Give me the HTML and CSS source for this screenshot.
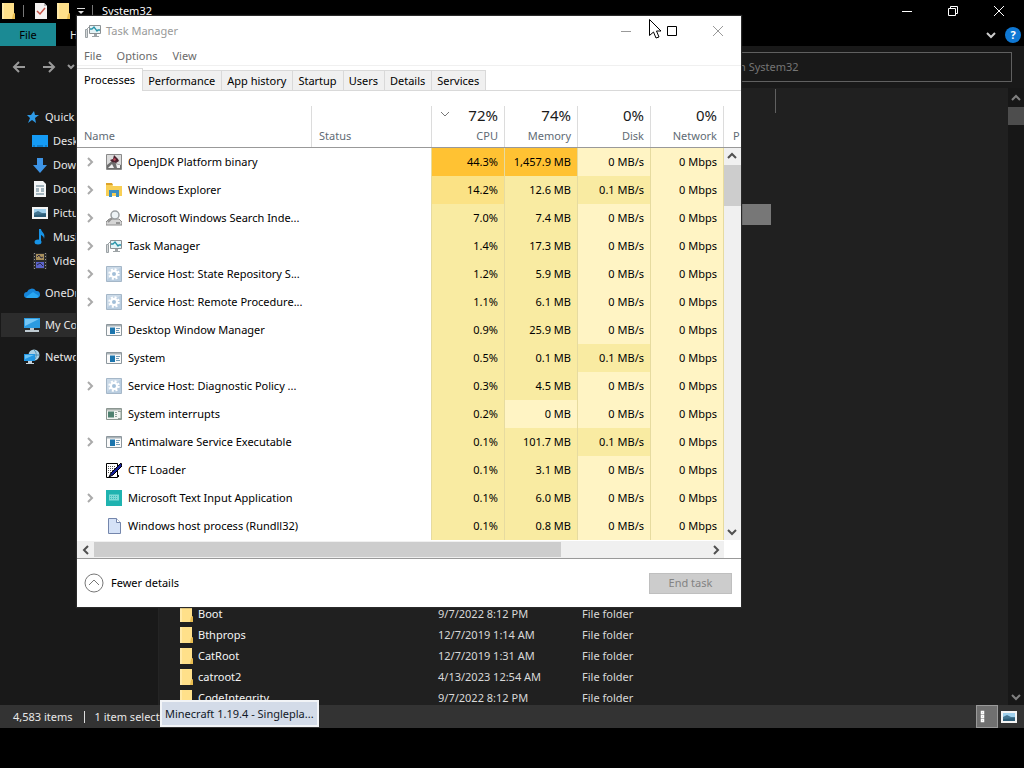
FILE: index.html
```html
<!DOCTYPE html>
<html lang="en">

<head>
	<meta charset="UTF-8">
	<title>System32</title>
	<link rel="stylesheet" href="styles.css">
</head>

<body>
	<!-- Shared icons -->
	<svg class="sprite" aria-hidden="true">
		<symbol id="i-folder" viewBox="0 0 16 16">
			<path d="M2 0h12v11l1 1v4H2z" fill="#ffe08a" />
			<path d="M2 0h2v16H2z" fill="#ffe9a8" />
			<path d="M13 11l2-1v6h-3z" fill="#e9bd51" />
		</symbol>
		<symbol id="i-chevron" viewBox="0 0 16 16">
			<path d="M6 4l4 4-4 4" fill="none" stroke="currentColor" stroke-width="2" />
		</symbol>
		<symbol id="i-taskmgr" viewBox="0 0 16 16">
			<path d="M.5 6.500h2v8h-2z" fill="#d5d8da" stroke="#9aa1a4" />
			<path d="M2 6l2-2" stroke="#9aa1a4" />
			<path d="M4.500 2.500h11v8h-11z" fill="#e4f3f6" stroke="#8b9194" />
			<path d="M5 6h2l2-2 3 4 1-1h2" fill="none" stroke="#2593a8" stroke-width="1.300" />
			<path d="M9 11h3v2h2v1H7v-1h2z" fill="#9da3a6" />
		</symbol>
		<symbol id="i-gear" viewBox="0 0 16 16">
			<path d="M.5.5h15v15H.5z" fill="#b9cde0" stroke="#a5b7c8" />
			<path d="M1 1h14L1 14z" fill="#cbdae8" />
			<circle cx="8" cy="8" r="4.500" fill="none" stroke="#fff" stroke-width="2.500" stroke-dasharray="1.900 1.634" />
			<circle cx="8" cy="8" r="3" fill="#a3bfd8" stroke="#fff" stroke-width="2" />
		</symbol>
		<symbol id="i-app" viewBox="0 0 16 16">
			<path d="M.5 2.500h15v11H.5z" fill="#fafafa" stroke="#8d979d" />
			<path d="M1 3h14v1.500H1z" fill="#a9b3b8" />
			<path d="M4 5.500h5v6.500H4z" fill="#1c75ad" />
			<path d="M10 6.500h4M10 8.500h3M10 10.500h4" stroke="#729bb5" />
		</symbol>
		<symbol id="i-picture" viewBox="0 0 16 16">
			<path d="M0 2h16v12H0z" fill="#f4f4f4" />
			<path d="M2 4h12v8H2z" fill="#9fd0ed" />
			<path d="M2 8l4-2 4 2h4v2H2z" fill="#447591" />
			<path d="M2 10l12-1v3H2z" fill="#2d5d78" />
		</symbol>
	</svg>

	<main class="desktop">
		<section class="explorer">
			<header class="explorer-title">
				<svg class="icon"><use href="#i-folder" /></svg>
				<span class="divider"></span>
				<svg class="icon" viewBox="0 0 16 16">
					<path d="M2 0h9l3 3v13H2z" fill="#f4f1f0" />
					<path d="M11 0v3h3" fill="#bcbcbc" />
					<path d="M4 8l3 3 5-6" fill="none" stroke="#c9564b" stroke-width="1.500" />
				</svg>
				<svg class="icon"><use href="#i-folder" /></svg>
				<svg class="customize" viewBox="0 0 8 8">
					<path d="M0 1.500h8" stroke="#ddd" />
					<path d="M1 4h6L4 7z" fill="#ddd" />
				</svg>
				<span class="divider"></span>
				<h1>System32</h1>
				<div class="controls">
					<button aria-label="Minimize"><svg viewBox="0 0 10 10"><path d="M0 5.500h10" /></svg></button>
					<button aria-label="Restore"><svg viewBox="0 0 10 10"><path d="M.5 2.500h7v7h-7zM2.500 2V.5h7v7H8" /></svg></button>
					<button aria-label="Close"><svg viewBox="0 0 10 10"><path d="M0 0l10 10M10 0L0 10" /></svg></button>
				</div>
			</header>

			<nav class="ribbon">
				<button class="file-tab">File</button>
				<button>Home</button>
				<div class="ribbon-tools">
					<button aria-label="Expand ribbon"><svg class="icon down"><use href="#i-chevron" /></svg></button>
					<button class="help" aria-label="Help">?</button>
				</div>
			</nav>

			<div class="address-row">
				<button aria-label="Back"><svg class="icon" viewBox="0 0 16 16"><path d="M14 8H3M8 3L3 8l5 5" /></svg></button>
				<button aria-label="Forward"><svg class="icon" viewBox="0 0 16 16"><path d="M2 8h11M8 3l5 5-5 5" /></svg></button>
				<button class="recent" aria-label="Recent locations"><svg viewBox="0 0 8 8"><path d="M1 2l3 3 3-3" /></svg></button>
				<input class="search" type="search" placeholder="Search System32" aria-label="Search System32">
			</div>

			<div class="explorer-body">
				<aside class="sidebar">
					<ul>
						<li><a href="#"><svg class="icon" viewBox="0 0 16 16"><path d="M10 2l1 4 4 0-4 3 1 5-4-3-4 3 2-5-3-3h4z" fill="#2e9be8" /></svg>Quick access</a></li>
						<li class="child"><a href="#"><svg class="icon" viewBox="0 0 16 16"><path d="M0 2h16v12H0z" fill="#159bf5" /><path d="M1 13h2M5 13h6M13 13h2" stroke="#0a5d9c" /></svg>Desktop</a></li>
						<li class="child"><a href="#"><svg class="icon" viewBox="0 0 16 16"><path d="M5 1h6v7h4l-7 8-7-8h4z" fill="#3d94e6" /></svg>Downloads</a></li>
						<li class="child"><a href="#"><svg class="icon" viewBox="0 0 16 16"><path d="M2 0h9l3 3v13H2z" fill="#f3f5f6" /><path d="M4 5h8M4 8h3M9 8h3M4 10h3M9 10h3M4 13h8" stroke="#537486" /></svg>Documents</a></li>
						<li class="child"><a href="#"><svg class="icon"><use href="#i-picture" /></svg>Pictures</a></li>
						<li class="child"><a href="#"><svg class="icon" viewBox="0 0 16 16"><ellipse cx="6" cy="13" rx="3.500" ry="2.500" fill="#1793e6" /><path d="M7 0h2c0 3 5 4 3 10 0-3-3-4-3-4v7H7z" fill="#1793e6" /></svg>Music</a></li>
						<li class="child"><a href="#"><svg class="icon" viewBox="0 0 16 16"><path d="M1 0h14v16H1z" fill="#2b2b2b" /><path d="M2.500 0v16M13.500 0v16" stroke="#999" stroke-dasharray="1 2" /><path d="M4 1h8v6H4z" fill="#a78f5c" /><path d="M4 9h8v6H4z" fill="#5a62c8" /><path d="M5 4l2-2 2 3 2-1M5 12l3-2 3 3" fill="none" stroke="#2a2740" /></svg>Videos</a></li>
					</ul>
					<ul>
						<li><a href="#"><svg class="icon" viewBox="0 0 16 16"><path d="M3 13a3 3 0 0 1 0-6 5 5 0 0 1 9-1 3.500 3.500 0 0 1 1 7z" fill="#1685d9" /><path d="M2 12l7-5 6 4-2 2H3z" fill="#29a7f2" /></svg>OneDrive</a></li>
					</ul>
					<ul>
						<li class="current"><a href="#"><svg class="icon" viewBox="0 0 16 16"><path d="M0 1h16v10H0z" fill="#2c9be0" /><path d="M1 2h14L1 9z" fill="#75c6f5" /><path d="M6 11h4v2H6zM1 13h14v2H1z" fill="#bfcbd2" /></svg>My Computer</a></li>
					</ul>
					<ul>
						<li><a href="#"><svg class="icon" viewBox="0 0 16 16"><circle cx="10" cy="6" r="5.500" fill="#a9cfe5" /><path d="M10 1c3 2 3 8 0 10M5 6h10" fill="none" stroke="#4e8fb5" /><path d="M0 5h11v7H0z" fill="#2296e3" /><path d="M1 6h9l-9 4z" fill="#6cc3f4" /><path d="M4 12h4v2h2v1H2v-1h2z" fill="#c4d2db" /></svg>Network</a></li>
					</ul>
				</aside>

				<div class="file-pane">
					<table class="files">
						<thead>
							<tr>
								<th class="f-name"></th>
								<th class="f-date"></th>
								<th class="f-type"></th>
								<th class="f-size"><span></span></th>
							</tr>
						</thead>
						<tbody>
							<tr class="above-selected"><td colspan="4"></td></tr>
							<tr class="selected"><td colspan="4"></td></tr>
							<tr class="below-selected"><td colspan="4"></td></tr>
							<tr><td><svg class="icon"><use href="#i-folder" /></svg>Boot</td><td>9/7/2022 8:12 PM</td><td>File folder</td><td></td></tr>
							<tr><td><svg class="icon"><use href="#i-folder" /></svg>Bthprops</td><td>12/7/2019 1:14 AM</td><td>File folder</td><td></td></tr>
							<tr><td><svg class="icon"><use href="#i-folder" /></svg>CatRoot</td><td>12/7/2019 1:31 AM</td><td>File folder</td><td></td></tr>
							<tr><td><svg class="icon"><use href="#i-folder" /></svg>catroot2</td><td>4/13/2023 12:54 AM</td><td>File folder</td><td></td></tr>
							<tr><td><svg class="icon"><use href="#i-folder" /></svg>CodeIntegrity</td><td>9/7/2022 8:12 PM</td><td>File folder</td><td></td></tr>
						</tbody>
					</table>
				</div>

				<div class="scrollbar dark">
					<svg class="icon up"><use href="#i-chevron" /></svg>
					<div class="thumb"></div>
					<svg class="icon down"><use href="#i-chevron" /></svg>
				</div>
			</div>

			<footer class="status-bar">
				<span>4,583 items</span>
				<span class="divider"></span>
				<span>1 item selected</span>
				<div class="views">
					<button class="active" aria-label="Details view">
						<svg viewBox="0 0 20 20"><path d="M4.500 4.500h2v2h-2zM4.500 8.500h2v2h-2zM4.500 12.500h2v2h-2z" fill="#555" stroke="#fff" stroke-width="1.500" /></svg>
					</button>
					<button aria-label="Thumbnail view"><svg class="icon"><use href="#i-picture" /></svg></button>
				</div>
			</footer>
		</section>

		<section class="taskmgr">
			<header class="tm-title">
				<svg class="icon"><use href="#i-taskmgr" /></svg>
				<h2>Task Manager</h2>
				<div class="controls">
					<button aria-label="Minimize"><svg viewBox="0 0 10 10"><path d="M0 5.500h10" /></svg></button>
					<button class="hover" aria-label="Maximize"><svg viewBox="0 0 10 10"><path d="M.5.5h9v9h-9z" /></svg></button>
					<button aria-label="Close"><svg viewBox="0 0 10 10"><path d="M0 0l10 10M10 0L0 10" /></svg></button>
				</div>
			</header>

			<nav class="tm-menu">
				<button>File</button>
				<button>Options</button>
				<button>View</button>
			</nav>

			<div class="tabs" role="tablist">
				<button role="tab" class="active" aria-selected="true">Processes</button>
				<button role="tab">Performance</button>
				<button role="tab">App history</button>
				<button role="tab">Startup</button>
				<button role="tab">Users</button>
				<button role="tab">Details</button>
				<button role="tab">Services</button>
			</div>

			<div class="process-view">
				<table class="processes">
					<colgroup>
						<col class="c-name">
						<col class="c-status">
						<col span="4" class="c-usage">
					</colgroup>
					<thead>
						<tr>
							<th><span>Name</span></th>
							<th><span>Status</span></th>
							<th class="sorted"><svg class="sort" viewBox="0 0 10 6"><path d="M1 1l4 4 4-4" /></svg><span><b>72%</b>CPU</span></th>
							<th><span><b>74%</b>Memory</span></th>
							<th><span><b>0%</b>Disk</span></th>
							<th><span><b>0%</b>Network</span></th>
						</tr>
					</thead>
					<tbody>
						<tr>
							<td><div><svg class="icon expand"><use href="#i-chevron" /></svg><svg class="icon" viewBox="0 0 16 16"><path d="M.5.5h15v15H.5z" fill="#dcdcdc" stroke="#8a8a8a" /><path d="M1 11l5-4 3 2 6 2v4H1z" fill="#6d6d6d" /><path d="M2 14l4-4 2 4zM10 10l4 1v3h-3z" fill="#f2f2f2" /><path d="M8 1l4 4 1 2-3 2-4-1-2-2 3-1z" fill="#49232f" /><path d="M8 4l2 1-1 2-2-1z" fill="#c64b5d" /></svg>OpenJDK Platform binary</div></td>
							<td></td><td class="hot">44.3%</td><td class="hot">1,457.9 MB</td><td>0 MB/s</td><td>0 Mbps</td>
						</tr>
						<tr>
							<td><div><svg class="icon expand"><use href="#i-chevron" /></svg><svg class="icon" viewBox="0 0 16 16"><path d="M0 2h6l1 2h9v10H0z" fill="#f8cf55" /><path d="M0 1h6l1 2H0z" fill="#dda329" /><path d="M3 8h10v7h-3v-4H6v4H3z" fill="#3c8fc0" /></svg>Windows Explorer</div></td>
							<td></td><td class="warm">14.2%</td><td class="low">12.6 MB</td><td class="low">0.1 MB/s</td><td>0 Mbps</td>
						</tr>
						<tr>
							<td><div><svg class="icon expand"><use href="#i-chevron" /></svg><svg class="icon" viewBox="0 0 16 16"><path d="M3 9h10l3 3v3H0v-3z" fill="#d5d5d5" stroke="#8c8c8c" /><path d="M10 13h4" stroke="#555" /><circle cx="9" cy="5" r="4" fill="#edf3f6" stroke="#9a9fa2" stroke-width="1.500" /><path d="M6 8l-4 4" stroke="#909090" stroke-width="2" /></svg>Microsoft Windows Search Inde...</div></td>
							<td></td><td class="low">7.0%</td><td class="low">7.4 MB</td><td>0 MB/s</td><td>0 Mbps</td>
						</tr>
						<tr>
							<td><div><svg class="icon expand"><use href="#i-chevron" /></svg><svg class="icon"><use href="#i-taskmgr" /></svg>Task Manager</div></td>
							<td></td><td class="low">1.4%</td><td class="low">17.3 MB</td><td>0 MB/s</td><td>0 Mbps</td>
						</tr>
						<tr>
							<td><div><svg class="icon expand"><use href="#i-chevron" /></svg><svg class="icon"><use href="#i-gear" /></svg>Service Host: State Repository S...</div></td>
							<td></td><td class="low">1.2%</td><td class="low">5.9 MB</td><td>0 MB/s</td><td>0 Mbps</td>
						</tr>
						<tr>
							<td><div><svg class="icon expand"><use href="#i-chevron" /></svg><svg class="icon"><use href="#i-gear" /></svg>Service Host: Remote Procedure...</div></td>
							<td></td><td class="low">1.1%</td><td class="low">6.1 MB</td><td>0 MB/s</td><td>0 Mbps</td>
						</tr>
						<tr>
							<td><div class="single"><svg class="icon"><use href="#i-app" /></svg>Desktop Window Manager</div></td>
							<td></td><td class="low">0.9%</td><td class="low">25.9 MB</td><td>0 MB/s</td><td>0 Mbps</td>
						</tr>
						<tr>
							<td><div class="single"><svg class="icon"><use href="#i-app" /></svg>System</div></td>
							<td></td><td class="low">0.5%</td><td class="low">0.1 MB</td><td class="low">0.1 MB/s</td><td>0 Mbps</td>
						</tr>
						<tr>
							<td><div><svg class="icon expand"><use href="#i-chevron" /></svg><svg class="icon"><use href="#i-gear" /></svg>Service Host: Diagnostic Policy ...</div></td>
							<td></td><td class="low">0.3%</td><td class="low">4.5 MB</td><td>0 MB/s</td><td>0 Mbps</td>
						</tr>
						<tr>
							<td><div class="single"><svg class="icon" viewBox="0 0 16 16"><path d="M.5 2.500h15v11H.5z" fill="#f2f4f2" stroke="#8b9691" /><path d="M1 3h14v1.500H1z" fill="#aab3af" /><path d="M2 5.500h6v6H2z" fill="#4f8170" /><path d="M9 6.500h2M9 8.500h2M9 10.500h2M12 5.500h3v7h-3" fill="none" stroke="#93a39b" /></svg>System interrupts</div></td>
							<td></td><td class="low">0.2%</td><td>0 MB</td><td>0 MB/s</td><td>0 Mbps</td>
						</tr>
						<tr>
							<td><div><svg class="icon expand"><use href="#i-chevron" /></svg><svg class="icon"><use href="#i-app" /></svg>Antimalware Service Executable</div></td>
							<td></td><td class="low">0.1%</td><td class="low">101.7 MB</td><td class="low">0.1 MB/s</td><td>0 Mbps</td>
						</tr>
						<tr>
							<td><div class="single"><svg class="icon" viewBox="0 0 16 16"><path d="M.5 1.500h11v14H.5z" fill="#fff" stroke="#000" /><path d="M2 4.500h8M2 6.500h8M2 8.500h6M2 10.500h4" stroke="#555" stroke-dasharray="1 1" /><path d="M15 1L5 11l-2 4 4-2L16 4z" fill="#15209a" stroke="#000" /><path d="M12 14h1" stroke="#000" stroke-width="2" /></svg>CTF Loader</div></td>
							<td></td><td class="low">0.1%</td><td class="low">3.1 MB</td><td>0 MB/s</td><td>0 Mbps</td>
						</tr>
						<tr>
							<td><div><svg class="icon expand"><use href="#i-chevron" /></svg><svg class="icon" viewBox="0 0 16 16"><path d="M0 0h16v16H0z" fill="#1fb3b0" /><path d="M3 4.500h10v6H3z" fill="#7edad7" /><path d="M4 6.500h8M4 8.500h8" stroke="#39bbb8" stroke-dasharray="1 1" /></svg>Microsoft Text Input Application</div></td>
							<td></td><td class="low">0.1%</td><td class="low">6.0 MB</td><td>0 MB/s</td><td>0 Mbps</td>
						</tr>
						<tr>
							<td><div class="single"><svg class="icon" viewBox="0 0 16 16"><path d="M2.500.5h8l4 4v11h-12z" fill="#d5e2f7" stroke="#7486ac" /><path d="M10.500.5v4h4" fill="#fff" stroke="#7486ac" /></svg>Windows host process (Rundll32)</div></td>
							<td></td><td class="low">0.1%</td><td class="low">0.8 MB</td><td>0 MB/s</td><td>0 Mbps</td>
						</tr>
					</tbody>
				</table>
				<div class="edge">
					<div class="next-column">P</div>
					<div class="scrollbar">
						<svg class="icon up"><use href="#i-chevron" /></svg>
						<div class="thumb"></div>
						<svg class="icon down"><use href="#i-chevron" /></svg>
					</div>
				</div>
			</div>

			<div class="scrollbar horizontal">
				<svg class="icon left"><use href="#i-chevron" /></svg>
				<div class="track"><div class="thumb"></div></div>
				<svg class="icon"><use href="#i-chevron" /></svg>
			</div>

			<footer class="tm-footer">
				<button class="fewer">
					<svg viewBox="0 0 20 20"><circle cx="10" cy="10" r="9" /><path d="M5 12l5-5 5 5" /></svg>
					Fewer details
				</button>
				<button class="end-task" disabled>End task</button>
			</footer>
		</section>

		<div class="tooltip">Minecraft 1.19.4 - Singlepla...</div>
		<svg class="cursor" viewBox="0 0 13 20"><path d="M.5.5v16l4-3.500 2.500 6 3-1-2.500-6H12z" /></svg>
	</main>
</body>

</html>
```
FILE: styles.css
```css
* {
	box-sizing: border-box;
}

body {
	margin: 0;
	background: #000;
	font-family: "Noto Sans", "Open Sans", sans-serif;
	font-size: 11px;
	line-height: 16px;
	color: #000;
}

button {
	font: inherit;
	color: inherit;
	background: none;
	border: 0;
	padding: 0;
}

svg {
	display: block;
	flex: none;
}

ul {
	list-style: none;
	margin: 0;
	padding: 0;
}

a {
	color: inherit;
	text-decoration: none;
}

table {
	border-collapse: separate;
	border-spacing: 0;
	table-layout: fixed;
}

h1,
h2 {
	margin: 0;
	font-size: 11px;
	font-weight: normal;
}

.sprite {
	display: none;
}

.icon {
	width: 16px;
	height: 16px;
}

.up {
	transform: rotate(-90deg);
}

.down {
	transform: rotate(90deg);
}

.left {
	transform: rotate(180deg);
}

.desktop {
	position: relative;
	height: 100vh;
	padding-bottom: 40px;
	overflow: hidden;
}

.controls {
	display: flex;
	align-self: stretch;
	margin-left: auto;
}

.controls button {
	display: grid;
	place-items: center;
	width: 46px;
}

.controls svg {
	width: 10px;
	height: 10px;
	overflow: visible;
	fill: none;
	stroke: currentColor;
}

/* Explorer */

.explorer {
	display: flex;
	flex-direction: column;
	height: 100%;
	color: #e8e8e8;
}

.explorer-title {
	display: flex;
	align-items: center;
	gap: 6px;
	height: 23px;
	padding: 0 2px 2px 0;
	color: #fff;
}

.divider {
	width: 2px;
	height: 12px;
	border-right: 1px solid #777;
}

.explorer-title .divider {
	margin-right: 3px;
}

.customize {
	width: 8px;
	height: 8px;
}

.ribbon {
	display: flex;
	height: 23px;
}

.ribbon .file-tab {
	width: 56px;
	margin-right: 14px;
	background: #1b8a94;
	color: #000;
}

.ribbon-tools {
	display: flex;
	align-items: center;
	gap: 6px;
	margin-left: auto;
	padding-right: 3px;
	color: #ccc;
}

.help {
	width: 16px;
	height: 16px;
	border-radius: 8px;
	background: #0f78d4;
	color: #fff;
	font-weight: bold;
}

.address-row {
	display: flex;
	align-items: center;
	height: 42px;
	padding: 0 12px 0 11px;
	background: #191919;
}

.address-row button {
	margin-right: 14px;
}

.address-row .recent {
	margin: 0 0 0 -4px;
}

.recent svg {
	width: 8px;
	height: 8px;
}

.address-row path {
	fill: none;
	stroke: #999;
	stroke-width: 2;
}

.search {
	width: 310px;
	height: 30px;
	margin-left: auto;
	padding: 0 8px 1px;
	border: 1px solid #606060;
	background: #191919;
	color: #fff;
	font: inherit;
}

.search::placeholder {
	color: #757575;
}

.explorer-body {
	display: flex;
	flex: 1;
	min-height: 0;
	background: #202020;
}

.sidebar {
	display: flex;
	flex-direction: column;
	gap: 8px;
	width: 159px;
	padding: 17px 0 0 1px;
	background: #191919;
	border-right: 1px solid #242424;
}

.sidebar a {
	display: flex;
	align-items: center;
	gap: 5px;
	height: 24px;
	padding-left: 23px;
	white-space: nowrap;
}

.sidebar .child a {
	padding-left: 31px;
}

.sidebar .current {
	background: #2c2c2c;
}

.file-pane {
	flex: 1;
	padding-left: 13px;
	overflow: hidden;
}

.files {
	width: 604px;
}

.f-name {
	width: 260px;
}

.f-date {
	width: 144px;
}

.f-type {
	width: 110px;
}

.files th {
	height: 32px;
	padding: 1px 0 7px;
}

.files th span {
	display: block;
	height: 24px;
	border-right: 1px solid #606060;
}

.files td {
	height: 21px;
	padding: 0 6px;
	color: #d8d8d8;
}

.files td:first-child {
	display: flex;
	align-items: center;
	gap: 4px;
	color: #f4f4f4;
}

.files .above-selected td,
.files .below-selected td,
.files .selected td {
	display: table-cell;
}

.files .above-selected td {
	height: 84px;
}

.files .selected td {
	background: #777 padding-box;
	border-right: 5px solid transparent;
}

.files .below-selected td {
	height: 378px;
}

.status-bar {
	display: flex;
	align-items: center;
	height: 23px;
	padding-left: 13px;
	gap: 10px;
	background: #333;
}

.status-bar .divider {
	border-color: #ddd;
}

.views {
	display: flex;
	align-self: stretch;
	gap: 3px;
	margin-left: auto;
	padding-right: 7px;
}

.views button {
	display: grid;
	place-items: center;
}

.views .active {
	width: 22px;
	background: #707070;
	border: 1px solid #999;
}

.views .active svg {
	width: 20px;
	height: 20px;
}

/* Scrollbars */

.scrollbar {
	display: flex;
	flex-direction: column;
	flex: 1;
	background: #f0f0f0;
	color: #505050;
}

.scrollbar .thumb {
	width: 100%;
	height: 41px;
	margin: 1px 0 auto;
	background: #cdcdcd;
}

.scrollbar.dark {
	flex: none;
	width: 16px;
	padding-top: 2px;
	background: #171717;
	color: #808080;
}

.scrollbar.dark .thumb {
	height: 18px;
	background: #4d4d4d;
}

.scrollbar.horizontal {
	flex-direction: row;
	align-items: center;
	height: 17px;
	margin-right: 17px;
	padding-left: 1px;
}

.horizontal .track {
	flex: 1;
}

.scrollbar.horizontal .thumb {
	width: 76%;
	height: 15px;
	margin: 0;
}

/* Task Manager */

.taskmgr {
	position: absolute;
	top: 16px;
	left: 77px;
	width: 664px;
	background: #fff;
	box-shadow: 0 0 1px 1px #2a2a2a;
}

.tm-title {
	display: flex;
	align-items: center;
	gap: 5px;
	height: 30px;
	padding: 0 0 1px 8px;
	color: #999;
}

.controls .hover {
	color: #000;
}

.tm-menu {
	display: flex;
	gap: 15px;
	height: 20px;
	padding-left: 7px;
	color: #6a6a6a;
	border-bottom: 1px solid #f0f0f0;
}

.tabs {
	display: flex;
	align-items: flex-end;
	height: 25px;
	border-bottom: 1px solid #d9d9d9;
}

.tabs button {
	height: 20px;
	padding: 0 6px 0 5px;
	background: #f0f0f0;
	border: 1px solid #d9d9d9;
	border-width: 1px 1px 0 0;
}

.tabs .active {
	height: 23px;
	margin-bottom: -1px;
	padding: 0 7px;
	background: #fff;
}

.process-view {
	display: flex;
	padding-bottom: 1px;
}

.processes {
	flex: 1;
}

.c-name {
	width: 235px;
}

.c-usage {
	width: 73px;
}

.processes th,
.next-column {
	height: 57px;
	border-bottom: 1px solid #999;
	font-weight: normal;
	color: #5f6b75;
	vertical-align: bottom;
}

.processes th {
	position: relative;
	padding: 15px 0 0;
	text-align: right;
}

.processes th span {
	display: flex;
	flex-direction: column;
	justify-content: flex-end;
	height: 41px;
	padding: 0 6px 3px 7px;
	border-right: 1px solid #dcdcdc;
}

.processes th:nth-child(-n+2) {
	text-align: left;
}

.processes b {
	margin-bottom: 4px;
	font-size: 15px;
	line-height: 18px;
	font-weight: normal;
	color: #1a1a1a;
}

.sort {
	position: absolute;
	top: 20px;
	left: 8px;
	width: 10px;
	height: 6px;
	fill: none;
	stroke: #777;
}

.processes td {
	height: 28px;
	padding: 0 6px;
	border-right: 1px solid #e6dba0;
	background: #fff4c4;
	text-align: right;
	white-space: nowrap;
}

.processes td:nth-child(-n+2) {
	padding: 0;
	border-color: #fff;
	background: #fff;
	text-align: left;
}

.processes td:nth-child(2) {
	border-color: #e6dba0;
}

.processes .low {
	background: #f9eba2;
}

.processes .warm {
	background: #fbe285;
}

.processes .hot {
	background: #ffc233;
}

.processes td div {
	display: flex;
	align-items: center;
	gap: 6px;
	padding-left: 5px;
}

.processes td .expand {
	margin-right: 2px;
	color: #aaa;
}

.processes td .single {
	padding-left: 29px;
}

.edge {
	display: flex;
	flex-direction: column;
	width: 17px;
}

.next-column {
	padding: 37px 0 0 9px;
	overflow: hidden;
}

.tm-footer {
	display: flex;
	align-items: center;
	justify-content: space-between;
	height: 49px;
	padding: 0 9px 0 7px;
	border-top: 1px solid #999;
}

.fewer {
	display: flex;
	align-items: center;
	gap: 7px;
}

.fewer svg {
	width: 20px;
	height: 20px;
	fill: none;
	stroke: #777;
}

.end-task {
	width: 83px;
	height: 21px;
	border: 1px solid #bfbfbf;
	background: #ccc;
	color: #838383;
}

/* Overlays */

.tooltip {
	position: absolute;
	left: 160px;
	bottom: 41px;
	padding: 4px 3px 3px;
	border: 2px solid #f2f4f7;
	background: #d3dbe8;
	color: #111827;
	white-space: nowrap;
}

.cursor {
	position: absolute;
	top: 19px;
	left: 649px;
	width: 13px;
	height: 20px;
	fill: #fff;
	stroke: #000;
}
```
